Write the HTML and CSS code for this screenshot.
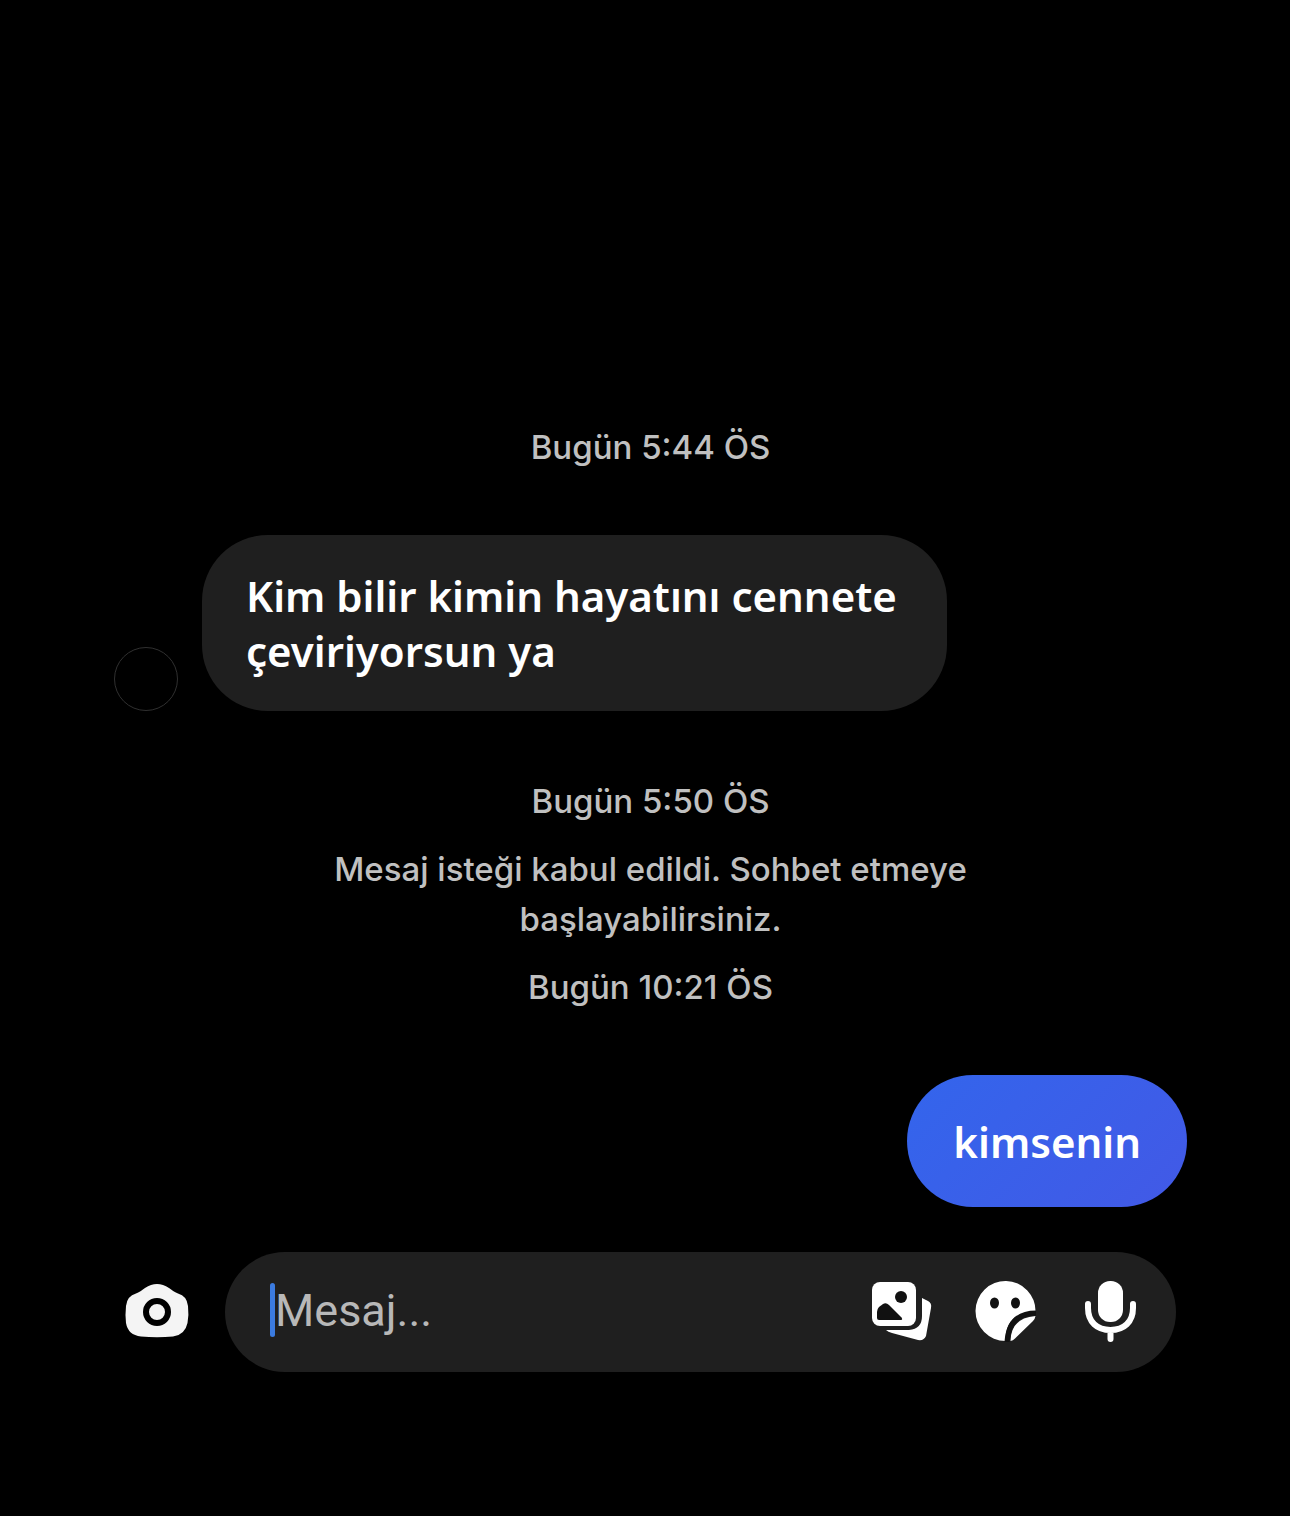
FILE: index.html
```html
<!DOCTYPE html>
<html lang="tr">
<head>
    <meta charset="UTF-8">
    <meta name="viewport" content="width=device-width, initial-scale=1.0">
    <title>Mesajlar</title>
    <link rel="stylesheet" href="styles.css">
</head>
<body>

<main class="chat">
    <p class="meta">Bugün 5:44 ÖS</p>

    <div class="row received">
        <div class="avatar"></div>
        <p class="bubble">Kim bilir kimin hayatını cennete çeviriyorsun ya</p>
    </div>

    <div class="notice">
        <p class="meta">Bugün 5:50 ÖS</p>
        <p class="meta">Mesaj isteği kabul edildi. Sohbet etmeye başlayabilirsiniz.</p>
        <p class="meta">Bugün 10:21 ÖS</p>
    </div>

    <div class="row sent">
        <p class="bubble">kimsenin</p>
    </div>

    <form class="composer">
        <button type="button" class="icon-button" aria-label="Kamera">
            <svg viewBox="0 0 64 64">
                <path fill="#f4f4f4" d="M20 8Q32 0 44 8C47 10 49 12 53 13.500Q62 16 63 26Q64 35 62.500 43Q60 55 48 56.500Q32 58 16 56.500Q3 55 1 43Q0 35 1 26Q2 16 11 13.500C15 12 17 10 20 8Z"/>
                <circle cx="32" cy="32" r="11" fill="#f4f4f4" stroke="#000" stroke-width="6"/>
            </svg>
        </button>
        <div class="field">
            <span class="caret"></span>
            <input type="text" class="message-input" placeholder="Mesaj..." aria-label="Mesaj">
            <button type="button" class="icon-button" aria-label="Galeri">
                <svg viewBox="0 0 64 64">
                    <path fill="#fff" d="M52 20L58 23Q62 25 61 30L56 58Q54 63 48 62L22 55Q18 54 16 52H39Q52 51 52 38Z"/>
                    <rect x="2" y="4" width="44" height="44" rx="8" fill="#fff"/>
                    <circle cx="31" cy="19" r="6" fill="#111"/>
                    <path fill="#111" d="M7 40V34Q7 31 9 29L13 26Q16 24 19 27L31.500 39.500Q33 42 31 42H9Q7 42 7 40Z"/>
                </svg>
            </button>
            <button type="button" class="icon-button" aria-label="Çıkartma">
                <svg viewBox="0 0 64 64">
                    <path fill="#fff" d="M61.500 34A30 30 0 1 0 31.500 63Q31 34 61.500 34Z"/>
                    <path fill="#fff" d="M61.500 38Q37 40 36.500 63Q39 62.500 41 60.500L59 43Q61 41 61.500 38Z"/>
                    <path fill="none" stroke="#111" stroke-width="5" d="M33 64Q35 35 62 35"/>
                    <ellipse cx="20.500" cy="25" rx="4.500" ry="5.500" fill="#111"/>
                    <ellipse cx="41.500" cy="25" rx="4.500" ry="5.500" fill="#111"/>
                </svg>
            </button>
            <button type="button" class="icon-button" aria-label="Sesli mesaj">
                <svg viewBox="0 0 64 64">
                    <rect x="20" y="3" width="25" height="41" rx="12" fill="#fff"/>
                    <path fill="none" stroke="#fff" stroke-width="6" stroke-linecap="round" d="M10 26V30C10 44 19 52 32.500 52S55 44 55 30V26M32.500 52V61"/>
                </svg>
            </button>
        </div>
    </form>
</main>

</body>
</html>
```
FILE: styles.css
```css
* {
    box-sizing: border-box;
}

body {
    margin: 0;
    background-color: #000;
    color: #fff;
    font-family: "Noto Sans", sans-serif;
}

p {
    margin: 0;
}

.chat {
    display: flex;
    flex-direction: column;
    justify-content: flex-end;
    min-height: 100vh;
    padding: 48px 103px 144px 114px;
}

.meta {
    max-width: 700px;
    margin: 0 auto;
    color: #c0c0c0;
    font-family: Inter, "Noto Sans", sans-serif;
    font-size: 33px;
    font-weight: 500;
    line-height: 50px;
    text-align: center;
}

.row {
    display: flex;
    align-items: flex-end;
    gap: 24px;
    margin: 63px 0;
}

.avatar {
    flex: none;
    width: 64px;
    height: 64px;
    border: 1px solid #303030;
    border-radius: 50%;
}

.bubble {
    max-width: 745px;
    padding: 33px 40px 33px 44px;
    border-radius: 66px;
    background-color: #1f1f1f;
    font-size: 42px;
    font-weight: 600;
    line-height: 55px;
}

.notice {
    display: flex;
    flex-direction: column;
    gap: 18px;
}

.received {
    margin-bottom: 65px;
}

.sent {
    justify-content: flex-end;
    margin-bottom: 45px;
}

.sent .bubble {
    padding: 39px 46px 38px;
    background: linear-gradient(135deg, #3365ec, #4259e6);
}

.composer {
    display: flex;
    align-items: center;
    gap: 36px;
    margin: 0 11px;
}

.field {
    display: flex;
    flex: 1;
    align-items: center;
    gap: 40px;
    min-width: 0;
    height: 120px;
    padding: 0 34px 4px 45px;
    border-radius: 60px;
    background-color: #1f1f1f;
}

.caret {
    flex: none;
    width: 5px;
    height: 54px;
    margin-right: -40px;
    border-radius: 3px;
    background-color: #3b7be0;
}

.message-input {
    flex: 1;
    min-width: 0;
    padding: 0;
    border: none;
    outline: none;
    background: none;
    color: #fff;
    font-family: Roboto, "Noto Sans", sans-serif;
    font-size: 45px;
    line-height: 55px;
}

.message-input::placeholder {
    color: #b8b8b8;
    opacity: 1;
}

.icon-button {
    flex: none;
    width: 64px;
    height: 64px;
    padding: 0;
    border: none;
    background: none;
    cursor: pointer;
}

.icon-button svg {
    display: block;
    width: 64px;
    height: 64px;
}
```
